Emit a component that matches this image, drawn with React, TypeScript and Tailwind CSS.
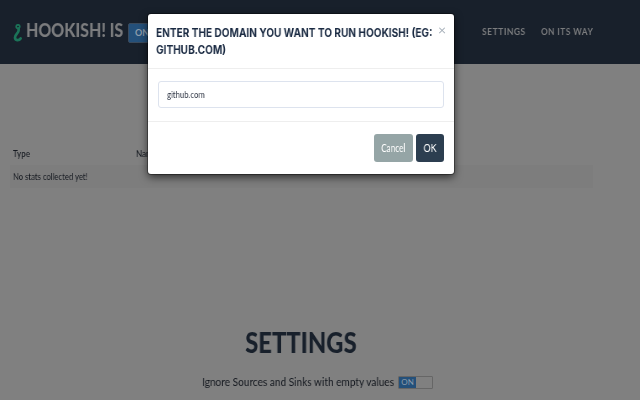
export default function App() {
  return (
    <div className="relative w-[640px] h-[400px] overflow-hidden bg-[#808080] font-['Lato',sans-serif]">
      <header className="h-[64px] bg-[#18202b] flex items-start pt-[17px] pl-[13px] pr-[47px]">
        <svg width="9" height="18" viewBox="0 0 9 18" className="mt-[7px] mr-[4px]" fill="none">
          <circle cx="5" cy="2.6" r="1.8" stroke="#1b7358" strokeWidth="1.7" />
          <path d="M5.6 4.5 L5.6 6.5 C5.6 9 2 10.5 2 13.5 C2 16.8 6 17 7.6 14.5" stroke="#1b7358" strokeWidth="2.7" strokeLinecap="round" />
        </svg>
        <span className="w-[97px] whitespace-nowrap origin-left scale-x-[0.84] will-change-transform text-[19px] leading-[26px] font-black text-[#7b7c7e]">HOOKISH! IS</span>
        <span className="ml-[5px] mt-[6px] w-[40px] h-[20px] bg-[#24507a] border border-[#3a4a5c] rounded-[2px] text-[9px] leading-[18px] font-bold text-[#8d9caa] pl-[6px]">ON</span>
        <nav className="ml-auto flex gap-[16px] mt-[8px] text-[10px] leading-[12px] font-bold tracking-[0.6px] text-[#7b7c7e]">
          <span className="w-[43px] whitespace-nowrap origin-left scale-x-[0.85] will-change-transform">SETTINGS</span>
          <span className="w-[52px] whitespace-nowrap origin-left scale-x-[0.82] will-change-transform">ON ITS WAY</span>
        </nav>
      </header>

      <main className="px-[10px]">
        <div className="flex pt-[82px] text-[10px] leading-[14px] font-medium text-[#14181f] h-[100px]">
          <span className="ml-[3px] w-[123px] origin-left scale-x-[0.8] will-change-transform">Type</span>
          <span className="origin-left scale-x-[0.8] will-change-transform">Name</span>
        </div>
        <div className="mt-[1px] h-[23px] w-[583px] bg-[#7d7d7d] pl-[3px] text-[10px] leading-[23px] text-[#14181f]">
          <span className="inline-block origin-left scale-x-[0.765] will-change-transform">No stats collected yet!</span>
        </div>
        <h2 className="mt-[137px] pr-[45px] text-center text-[28px] leading-[34px] font-black text-[#18202b] scale-x-[0.85] will-change-transform">SETTINGS</h2>
        <div className="mt-[15px] flex items-center pl-[192px]">
          <span className="w-[196px] whitespace-nowrap origin-left scale-x-[0.84] will-change-transform text-[12px] leading-[16px] text-[#14181f]">Ignore Sources and Sinks with empty values</span>
          <span className="flex w-[35px] h-[13px] border border-[#666] rounded-[1px] overflow-hidden">
            <span className="w-[17px] bg-[#24507a] text-[8px] leading-[11px] text-[#8d9caa] text-center">ON</span>
          </span>
        </div>
      </main>

      <div className="absolute left-[148px] top-[14px] w-[306px] h-[160px] bg-white rounded-[3px] shadow-[0_3px_9px_rgba(0,0,0,0.65),0_0_0_1px_rgba(0,0,0,0.35)] flex flex-col">
        <div className="relative h-[55px] border-b border-[#eeeeee] pl-[8px] pt-[10px]">
          <h3 className="font-['Inter',sans-serif] origin-left scale-x-[0.84] will-change-transform text-[12px] leading-[17px] font-bold text-[#1a2a42] whitespace-nowrap">
            ENTER THE DOMAIN YOU WANT TO RUN HOOKISH! (EG:<br />GITHUB.COM)
          </h3>
          <span className="absolute right-[8px] top-[6px] text-[14px] leading-[20px] text-[#a9b2bb]">×</span>
        </div>
        <div className="h-[53px] border-b border-[#eeeeee] px-[10px] pt-[12px]">
          <div className="h-[27px] border border-[#dde3ee] rounded-[3px] pl-[8px] text-[10px] leading-[25px] text-[#333a48]">
            <span className="inline-block origin-left scale-x-[0.77] will-change-transform">github.com</span>
          </div>
        </div>
        <div className="flex justify-end gap-[3px] px-[10px] pt-[12px]">
          <button className="w-[39px] h-[28px] rounded-[3px] bg-[#95a5a6] text-white text-[11px]"><span className="inline-block scale-x-[0.74] will-change-transform">Cancel</span></button>
          <button className="w-[28px] h-[28px] rounded-[3px] bg-[#2c3e50] text-white text-[11px]"><span className="inline-block scale-x-[0.8] will-change-transform">OK</span></button>
        </div>
      </div>
    </div>
  );
}
